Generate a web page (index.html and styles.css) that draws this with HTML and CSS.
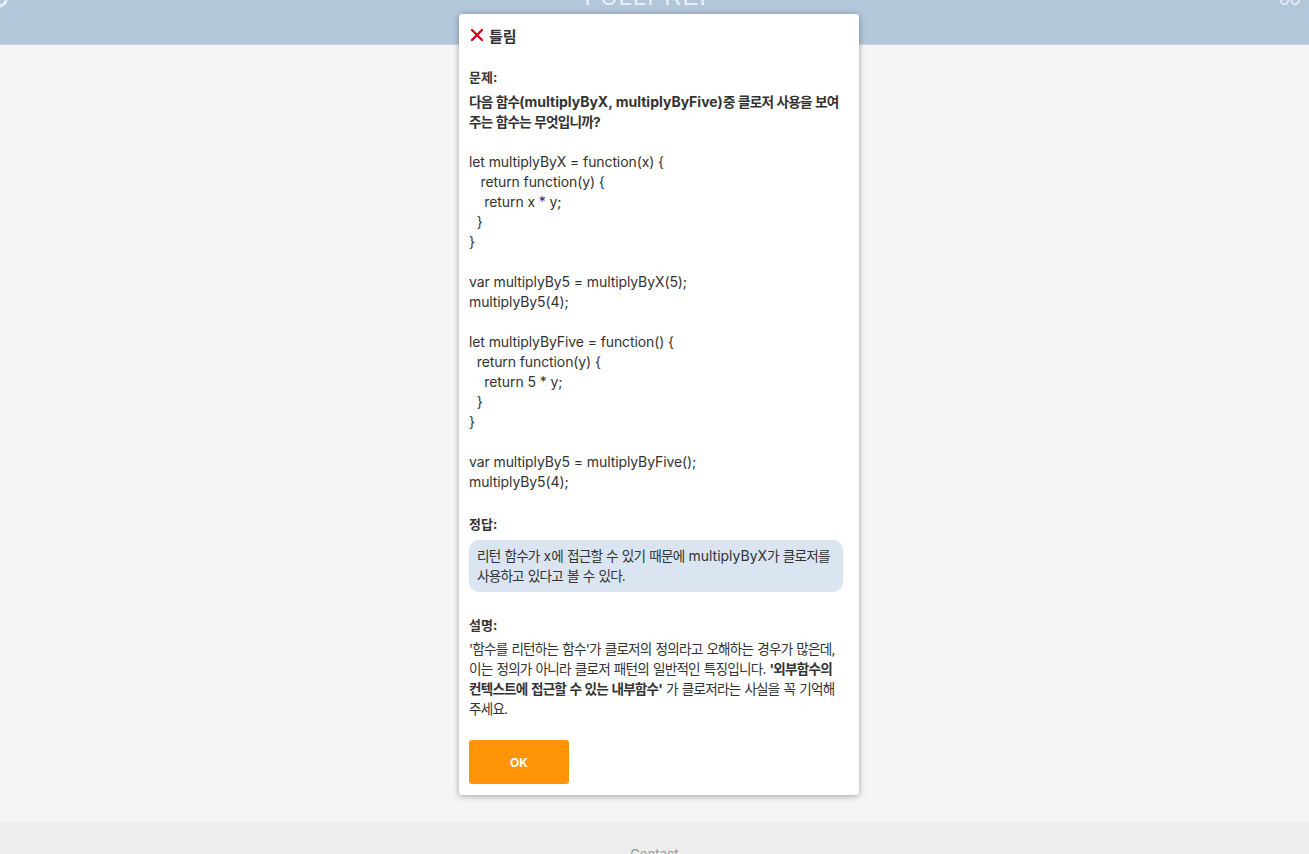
FILE: index.html
```html
<!DOCTYPE html>
<html lang="ko">
<head>
<meta charset="utf-8">
<title>틀림</title>
<link rel="stylesheet" href="styles.css">
</head>
<body>
<div class="page">
  <header class="topbar">
    <span class="side-icon left"></span>
    <span class="brand">FULLPREP</span>
    <span class="side-icon right">oo</span>
  </header>
  <main class="content"></main>
  <footer class="footer"><span class="footer-text">Contact</span></footer>
</div>

<div class="modal">
  <div class="modal-title">
    <svg class="x-icon" width="14" height="14" viewBox="0 0 14 14"><path d="M2 2 L12 12 M12 2 L2 12" stroke="#d0021b" stroke-width="2.4" stroke-linecap="round" fill="none"/></svg>
    <span>틀림</span>
  </div>

  <div class="label first">문제:</div>
  <p class="question ko">다음 함수<span class="lat">(multiplyByX, multiplyByFive)</span>중 클로저 사용을 보여주는 함수는 무엇입니까?</p>
  <pre class="code">let multiplyByX = function(x) {
   return function(y) {
    return x * y;
  }
}

var multiplyBy5 = multiplyByX(5);
multiplyBy5(4);

let multiplyByFive = function() {
  return function(y) {
    return 5 * y;
  }
}

var multiplyBy5 = multiplyByFive();
multiplyBy5(4);</pre>

  <div class="label">정답:</div>
  <div class="answer ko">리턴 함수가 <span class="lat">x</span>에 접근할 수 있기 때문에 <span class="lat">multiplyByX</span>가 클로저를 사용하고 있다고 볼 수 있다.</div>

  <div class="label expl-label">설명:</div>
  <p class="explain ko">'함수를 리턴하는 함수'가 클로저의 정의라고 오해하는 경우가 많은데, 이는 정의가 아니라 클로저 패턴의 일반적인 특징입니다. <b>'외부함수의 컨텍스트에 접근할 수 있는 내부함수'</b> 가 클로저라는 사실을 꼭 기억해 주세요.</p>

  <button class="ok-btn">OK</button>
</div>
</body>
</html>
```

FILE: styles.css
```css
* { box-sizing: border-box; }
html, body { margin: 0; padding: 0; }
body {
  font-family: Inter, "Noto Sans", "Noto Sans CJK KR", sans-serif;
  color: #333;
  background: #f5f5f5;
  overflow: hidden;
}
.page {
  display: flex;
  flex-direction: column;
  height: 854px;
}
.topbar {
  height: 45px;
  background: #b3c7db;
  border-bottom: 1px solid #c9d6e4;
  display: flex;
  justify-content: space-between;
  align-items: flex-start;
  overflow: hidden;
  flex-shrink: 0;
}
.brand {
  color: rgba(255,255,255,0.75);
  font-family: "Liberation Sans", sans-serif;
  font-size: 24px;
  letter-spacing: 1px;
  line-height: 24px;
  margin-top: -15px;
  margin-left: 14px;
}
.side-icon {
  width: 20px;
  color: rgba(255,255,255,0.7);
  font-size: 18px;
  line-height: 18px;
  margin-top: -10px;
}
.side-icon.left {
  border: 3px solid rgba(255,255,255,0.7);
  border-radius: 50%;
  height: 20px;
  margin-left: -12px;
  margin-top: -12px;
}
.side-icon.right { width: 30px; }
.content {
  flex: 1;
  background: #f5f5f5;
}
.footer {
  height: 32px;
  background: #ededed;
  display: flex;
  justify-content: center;
  flex-shrink: 0;
  overflow: hidden;
}
.footer-text {
  color: #999;
  font-size: 13px;
  margin-top: 24px;
}

.modal {
  position: absolute;
  left: 459px;
  top: 14px;
  width: 400px;
  background: #fff;
  border-radius: 3px;
  box-shadow: 0 1px 6px rgba(0,0,0,0.35);
  padding: 10px 14px 11px 10px;
}
.modal-title {
  display: flex;
  align-items: center;
  gap: 5px;
  height: 22px;
  font-size: 15px;
  font-weight: 700;
  color: #333;
  padding-left: 1px;
}
.x-icon { display: block; }
.label {
  font-size: 13px;
  font-weight: 700;
  line-height: 20px;
  margin-top: 10px;
}
.label.first { margin-top: 21px; }

/* Korean text: narrower hangul like the original system font */
.ko {
  font-size: 13.6px;
  letter-spacing: -0.8px;
  word-spacing: 1px;
  line-height: 20px;
}
.ko .lat {
  font-size: 14px;
  letter-spacing: 0;
  word-spacing: 0;
}

.question {
  margin: 5px -4px 0 0;
  font-weight: 700;
}
.code {
  margin: 20px 0 0;
  font-family: Inter, "Noto Sans", "Noto Sans CJK KR", sans-serif;
  font-size: 14px;
  letter-spacing: -0.1px;
  line-height: 20px;
  white-space: pre-wrap;
  color: #333;
}
.code + .label { margin-top: 22px; }
.answer {
  margin-top: 6px;
  margin-right: 2px;
  background: #dae5f1;
  border-radius: 10px;
  padding: 6px 6px 6px 8px;
  word-break: keep-all;
}
.label.expl-label { margin-top: 23px; }
.explain {
  margin: 4px -4px 0 0;
  word-break: keep-all;
}
.explain b { font-weight: 700; }
.ok-btn {
  display: block;
  margin-top: 21px;
  width: 100px;
  height: 44px;
  border: none;
  border-radius: 3px;
  background: #ff9408;
  color: #fff;
  font-family: Inter, "Noto Sans", sans-serif;
  font-weight: 700;
  font-size: 12px;
}
```
